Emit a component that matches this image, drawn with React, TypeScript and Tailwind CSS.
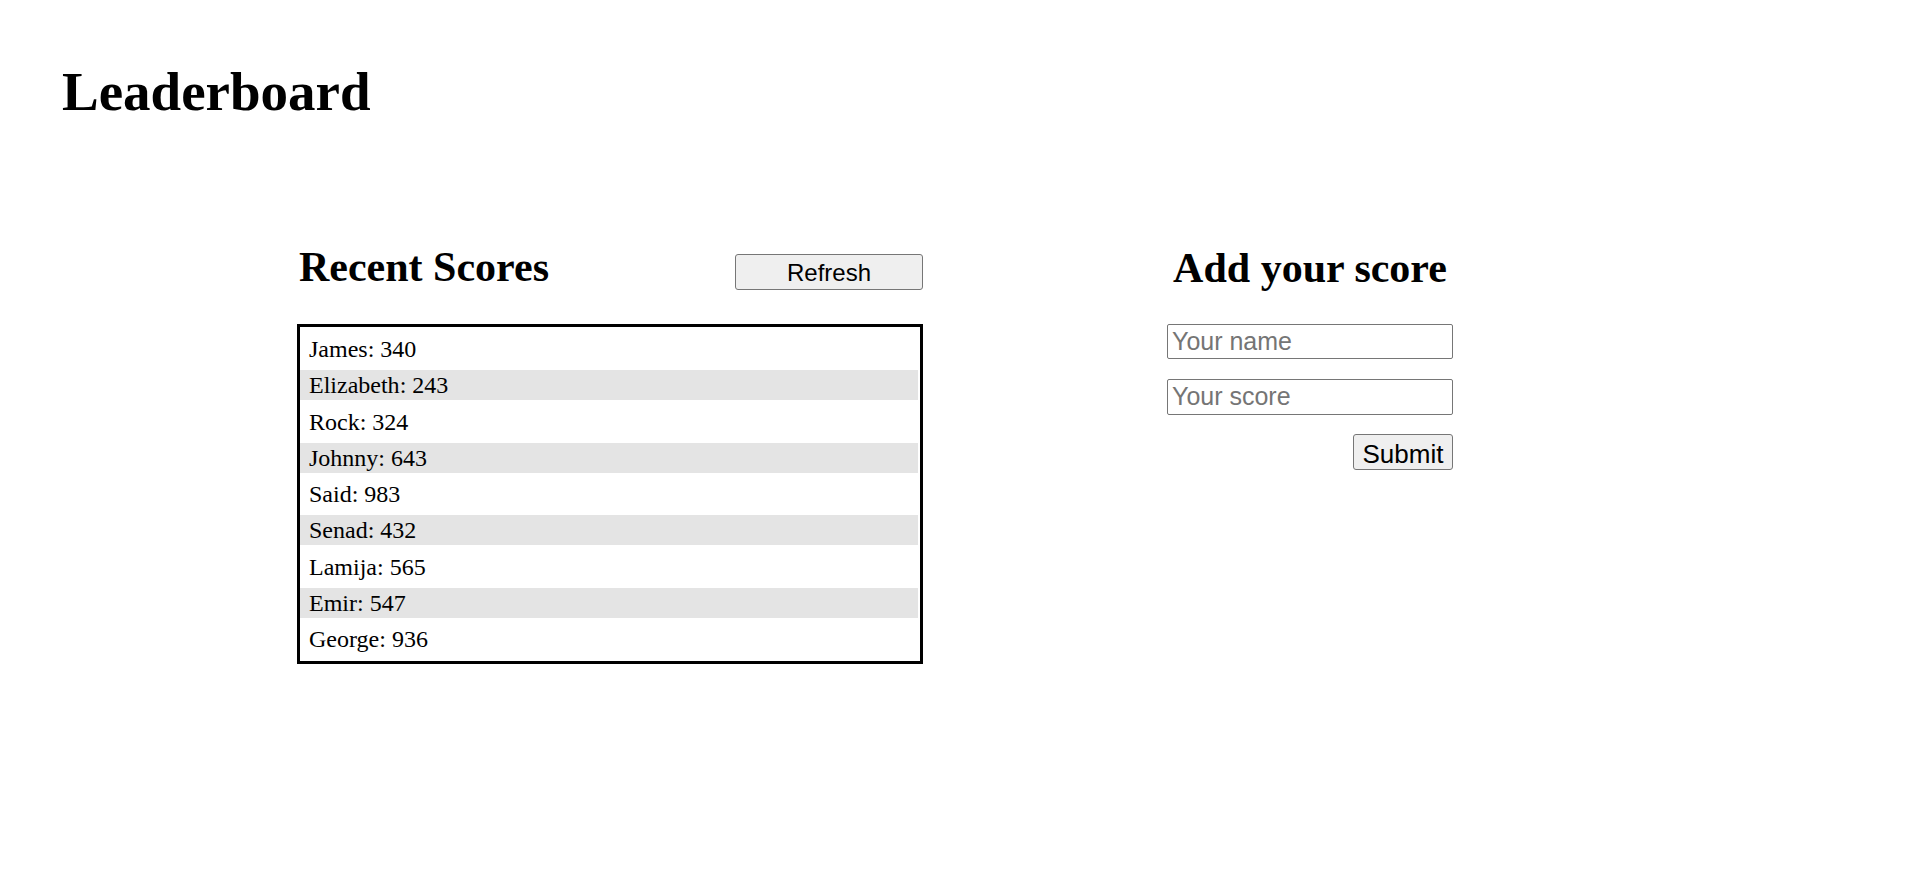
import { useState } from 'react';

const SCORES = [
  { name: 'James', score: 340 },
  { name: 'Elizabeth', score: 243 },
  { name: 'Rock', score: 324 },
  { name: 'Johnny', score: 643 },
  { name: 'Said', score: 983 },
  { name: 'Senad', score: 432 },
  { name: 'Lamija', score: 565 },
  { name: 'Emir', score: 547 },
  { name: 'George', score: 936 },
];

export default function App() {
  const [name, setName] = useState('');
  const [score, setScore] = useState('');

  return (
    <div className="min-h-screen bg-white text-black font-['Liberation_Serif','Times_New_Roman',serif]">
      <h1 className="pl-[62px] pt-[64px] text-[55px] leading-[55px] font-bold">Leaderboard</h1>

      <div className="flex mt-[127px] ml-[297px] gap-[244px]">
        {/* Recent scores */}
        <section className="w-[626px]">
          <div className="flex justify-between items-start h-[78px]">
            <h2 className="ml-[2px] text-[42px] leading-[42px] font-bold">Recent Scores</h2>
            <button className="mt-[8px] w-[188px] h-[36px] bg-[#efefef] border border-[#767676] rounded-[3px] text-[24px] font-['Liberation_Sans',Arial,sans-serif]">
              Refresh
            </button>
          </div>
          <ul className="border-[3px] border-black pt-[7px] pb-[7px] pr-[2px] flex flex-col gap-[6.3px]">
            {SCORES.map((s, i) => (
              <li
                key={s.name}
                className={`h-[30px] pl-[9px] text-[24px] leading-[30px] ${i % 2 === 1 ? 'bg-[#e4e4e4]' : ''}`}
              >
                {s.name}: {s.score}
              </li>
            ))}
          </ul>
        </section>

        {/* Add score form */}
        <section className="w-[286px]">
          <div className="h-[78px] pt-[1px]">
            <h2 className="text-center text-[42px] leading-[42px] font-bold">Add your score</h2>
          </div>
          <div className="flex flex-col items-end gap-[20px] font-['Liberation_Sans',Arial,sans-serif]">
            <input
              value={name}
              onChange={e => setName(e.target.value)}
              placeholder="Your name"
              className="w-full h-[35px] px-[4px] text-[25px] border border-[#767676] rounded-[2px] placeholder:text-[#757575]"
            />
            <input
              value={score}
              onChange={e => setScore(e.target.value)}
              placeholder="Your score"
              className="w-full h-[36px] px-[4px] text-[25px] border border-[#767676] rounded-[2px] placeholder:text-[#757575]"
            />
            <button className="-mt-px w-[100px] h-[36px] bg-[#efefef] border border-[#767676] rounded-[3px] text-[26px]">
              Submit
            </button>
          </div>
        </section>
      </div>
    </div>
  );
}
